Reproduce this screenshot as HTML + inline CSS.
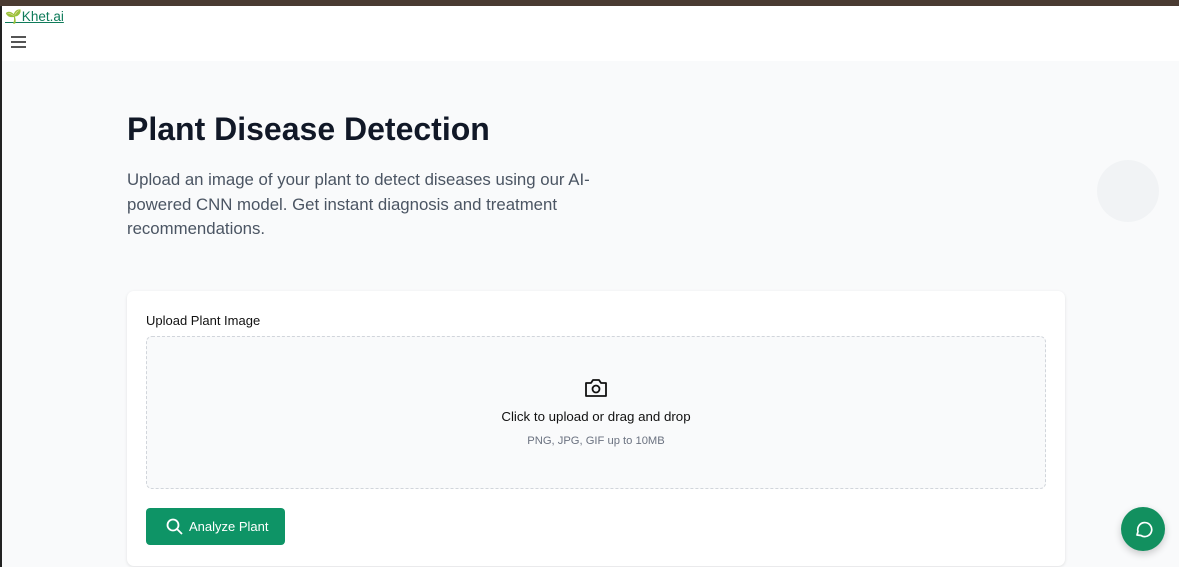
<!DOCTYPE html>
<html><head><meta charset="utf-8"><style>
body{margin:0;width:1179px;height:567px;overflow:hidden;background:#f9fafb;font-family:"Liberation Sans",sans-serif;position:relative}
.topbar{position:absolute;top:0;left:0;width:1179px;height:6px;background:#4a3b32}
.leftline{position:absolute;top:6px;left:0;width:2px;height:561px;background:#222}
.header{position:absolute;top:6px;left:2px;width:1177px;height:55px;background:#fff}
.logo{position:absolute;left:3px;top:3px;font-size:13.5px;color:#0f7b5a;text-decoration:underline}
.menu{position:absolute;left:9px;top:30px}
.menu div{width:15px;height:2px;background:#555;margin-bottom:3px}
h1{position:absolute;left:127px;top:111px;margin:0;font-size:32px;font-weight:bold;color:#111827}
.sub{position:absolute;left:127px;top:168px;width:480px;font-size:16.8px;line-height:24.5px;color:#4b5563}
.card{position:absolute;left:127px;top:291px;width:938px;height:275px;background:#fff;border-radius:7px;box-shadow:0 1px 3px rgba(0,0,0,.1)}
.lbl{position:absolute;left:19px;top:22px;font-size:13px;color:#111;font-weight:500}
.drop{position:absolute;left:19px;top:45px;width:898px;height:151px;border:1.5px dashed #d1d5db;border-radius:6px;background:#f9fafb}
.t1{position:absolute;top:72px;width:100%;text-align:center;font-size:13.3px;color:#111}
.t2{position:absolute;top:98px;width:100%;text-align:center;font-size:11.2px;color:#6b7280}
.btn{position:absolute;left:19px;top:217px;width:139px;height:37px;background:#0e9466;border-radius:4px;color:#fff;font-size:13px}
.chat{position:absolute;left:1121px;top:507px;width:44px;height:44px;border-radius:50%;background:#12905f;box-shadow:0 3px 8px rgba(0,0,0,.2)}
.ghost{position:absolute;left:1097px;top:160px;width:62px;height:62px;border-radius:50%;background:#f1f3f5}
</style></head><body>
<div class="topbar"></div><div class="leftline"></div>
<div class="header"><span class="logo">🌱Khet.ai</span><div class="menu"><div></div><div></div><div></div></div></div>
<div class="ghost"></div>
<h1>Plant Disease Detection</h1>
<div class="sub">Upload an image of your plant to detect diseases using our AI-powered CNN model. Get instant diagnosis and treatment recommendations.</div>
<div class="card">
<div class="lbl">Upload Plant Image</div>
<div class="drop">
<svg style="position:absolute;left:437px;top:40px" width="24" height="22" viewBox="0 0 24 22" fill="none" stroke="#111" stroke-width="1.8" stroke-linejoin="round"><path d="M2 6h5l2-3h6l2 3h5v13H2z"/><circle cx="12" cy="12" r="3.5"/></svg>
<div class="t1">Click to upload or drag and drop</div>
<div class="t2">PNG, JPG, GIF up to 10MB</div>
</div>
<div class="btn"><svg style="position:absolute;left:20px;top:10px" width="17" height="17" viewBox="0 0 17 17" fill="none" stroke="#fff" stroke-width="1.8"><circle cx="7" cy="7" r="5.5"/><path d="M11 11l5 5"/></svg><span style="position:absolute;left:43px;top:11px">Analyze Plant</span></div>
</div>
<div class="chat"><svg style="position:absolute;left:12px;top:12px" width="20" height="20" viewBox="0 0 20 20" fill="none" stroke="#fff" stroke-width="1.7" stroke-linejoin="round"><path d="M4 16l1-3.5A7 7 0 1 1 8 16.5z"/></svg></div>
</body></html>
